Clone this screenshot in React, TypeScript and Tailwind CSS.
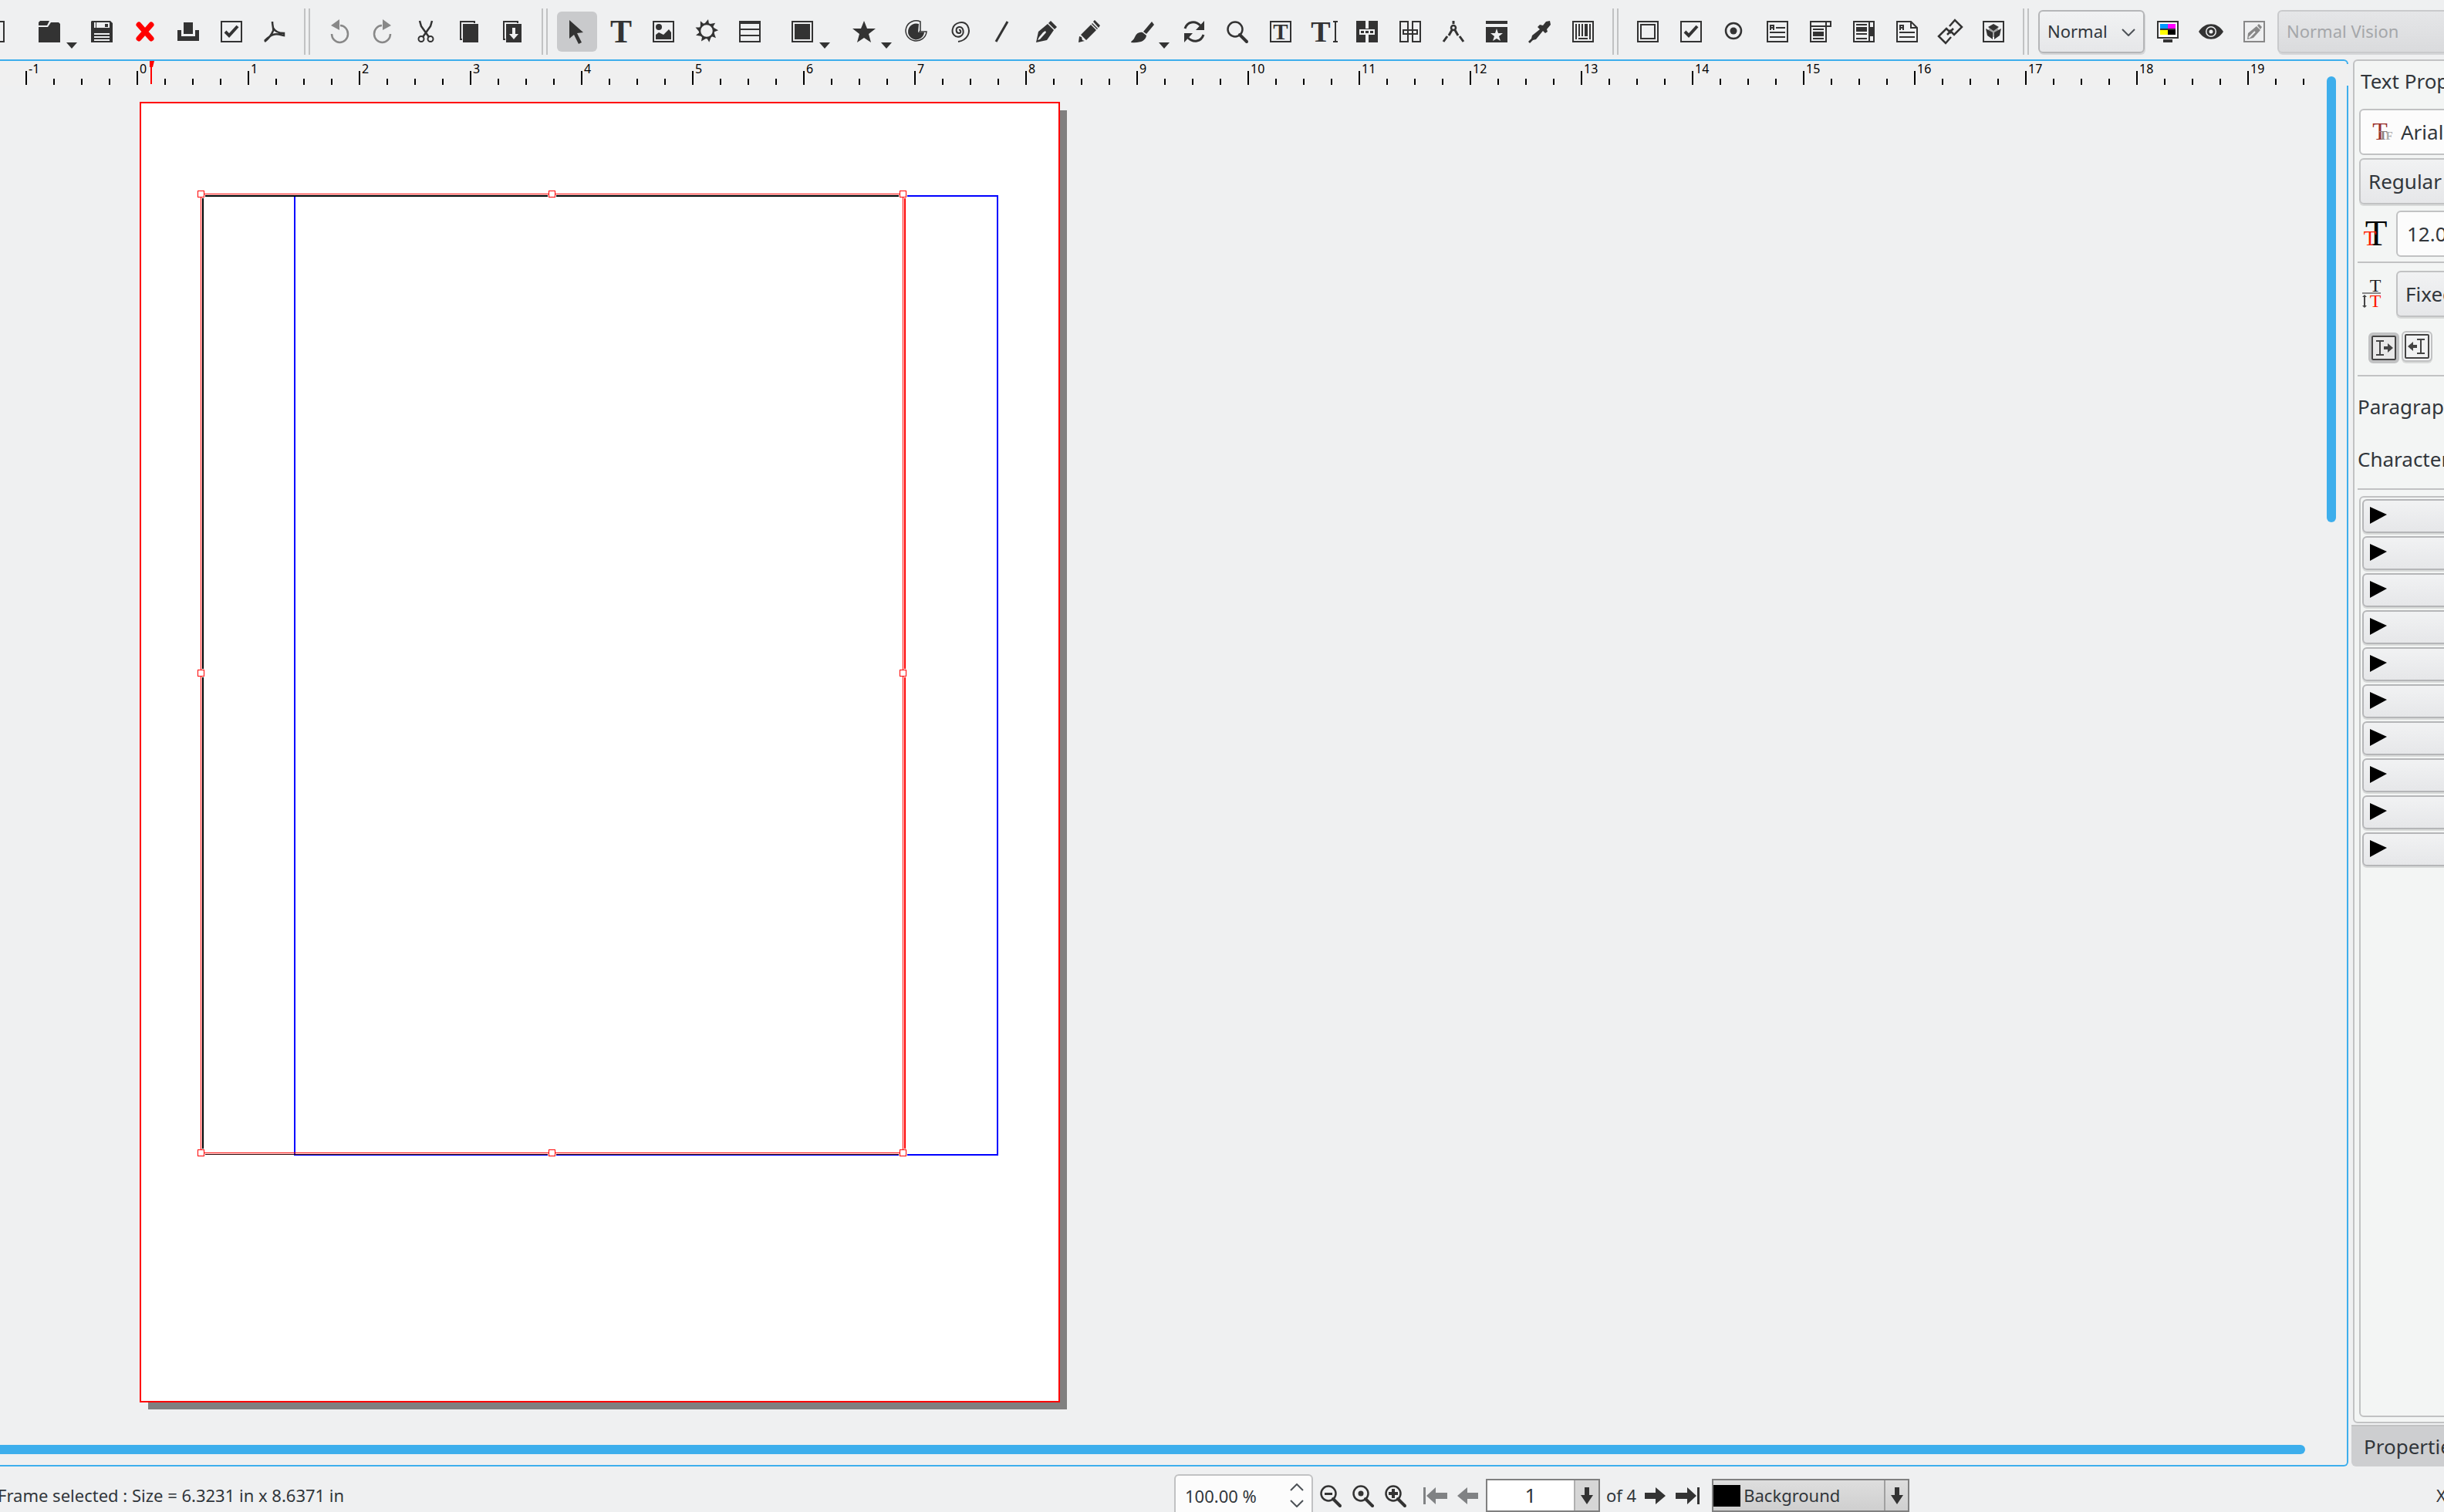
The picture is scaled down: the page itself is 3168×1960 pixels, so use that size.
import React from 'react';
import clsx from 'clsx';

interface IconProps {
  children: React.ReactNode;
  className?: string;
}

const Icon: React.FC<IconProps> = ({ children, className }) => (
  <svg
    viewBox="0 0 28 28"
    aria-hidden="true"
    className={clsx('size-7 shrink-0 overflow-visible fill-current stroke-current', className)}
    strokeWidth="0"
  >
    {children}
  </svg>
);

interface GlyphProps {
  x: number;
  y: number;
  size: number;
  children: string;
  color?: string;
  weight?: 'bold' | 'normal';
}

const Glyph: React.FC<GlyphProps> = ({ x, y, size, children, color = 'currentColor', weight = 'bold' }) => (
  <text x={x} y={y} fontSize={size} fill={color} fontWeight={weight} fontFamily="'Liberation Serif', serif" textAnchor="middle">
    {children}
  </text>
);

const Frame = () => <rect x="1" y="1" width="26" height="26" fill="none" strokeWidth="2" />;

const CheckMark = () => (
  <path d="M6 14l5 5L22 7" fill="none" strokeWidth="4" />
);

const Magnifier = () => (
  <>
    <circle cx="11" cy="11" r="9.5" fill="none" strokeWidth="2.5" />
    <path d="M17 18l9 9" fill="none" strokeWidth="4" strokeLinecap="round" />
  </>
);

const DropArrow = () => (
  <svg viewBox="0 0 14 8" aria-hidden="true" className="absolute right-0.5 bottom-1 h-2 w-3.5 fill-[#333333]">
    <path d="M0 0h14L7 8z" />
  </svg>
);

interface ToolProps {
  label: string;
  menu?: boolean;
  active?: boolean;
  disabled?: boolean;
  className?: string;
  children: React.ReactNode;
}

const Tool: React.FC<ToolProps> = ({ label, menu, active, disabled, className, children }) => (
  <button
    type="button"
    aria-label={label}
    aria-pressed={active}
    disabled={disabled}
    className={clsx(
      'relative flex h-13 shrink-0 items-center justify-center rounded-md',
      menu ? 'w-19' : 'w-13',
      active && 'bg-[#c9cacc]',
      disabled ? 'text-[#888888]' : 'text-[#333333]',
      className,
    )}
  >
    <Icon>{children}</Icon>
    {menu && <DropArrow />}
  </button>
);

const Separator = () => (
  <div className="flex h-15 w-6 shrink-0 justify-center gap-1">
    <div className="w-0.5 bg-[#c1c2c3]" />
    <div className="w-0.5 bg-[#c1c2c3]" />
  </div>
);

const FileTools = () => (
  <>
    <Tool label="New" className="-ml-[30px]">
      <rect x="1" y="1" width="22" height="26" fill="none" strokeWidth="2" />
    </Tool>
    <Tool label="Open" menu>
      <path d="M2 0h12l-3 6H0V2zM0 8h12l4-6h10l2 2v24H0z" />
    </Tool>
    <Tool label="Save">
      <path fillRule="evenodd" d="M1 0h24l3 3v25H0V1zM4 2v7h2V2zM7 2v7h17V2zM4 16v2h20v-2zM4 20v2h20v-2zM4 24v2h20v-2z" />
      <path d="M18 4h4v4h-4z" />
    </Tool>
    <Tool label="Close">
      <path d="M6 5l16 18M22 5L6 23" stroke="#ff0000" strokeWidth="7" strokeLinecap="round" />
    </Tool>
    <Tool label="Print">
      <path d="M0 12h5v8h18v-8h5v14H0zM8 2h12v15H8z" />
    </Tool>
    <Tool label="Preflight Verifier">
      <Frame />
      <CheckMark />
    </Tool>
    <Tool label="Save as PDF">
      <path d="M11 1c0 6 2 9 1 12-2 5-6 10-11 14M12 9c2 4 5 7 14 7v3c-5-1-9-3-14-1-4 1-7 4-11 8" fill="none" strokeWidth="2.5" />
    </Tool>
  </>
);

const EditTools = () => (
  <>
    <Tool label="Undo" disabled>
      <path d="M4 17A10.5 11 0 1 0 15 6" fill="none" strokeWidth="2.5" />
      <path d="M3 6L14-2v14z" />
    </Tool>
    <Tool label="Redo" disabled>
      <path d="M24 17A10.5 11 0 1 1 13 6" fill="none" strokeWidth="2.5" />
      <path d="M25 6L14-2v14z" />
    </Tool>
    <Tool label="Cut">
      <path d="M6 0l2 7 10 14M22 0l-2 7-10 14" fill="none" strokeWidth="2.5" />
      <circle cx="8" cy="23.5" r="3.5" fill="none" strokeWidth="2" />
      <circle cx="20" cy="23.5" r="3.5" fill="none" strokeWidth="2" />
    </Tool>
    <Tool label="Copy">
      <path d="M3 24V1h18v2" fill="none" strokeWidth="2" />
      <path d="M2 23h3v2H2zM6 4h20v24H6z" />
    </Tool>
    <Tool label="Paste">
      <path d="M3 24V1h18v2" fill="none" strokeWidth="2" />
      <path d="M2 23h3v2H2z" />
      <path fillRule="evenodd" d="M6 4h20v24H6zM14 9v8h-4l6 7 6-7h-4V9z" />
    </Tool>
  </>
);

const InsertTools = () => (
  <>
    <Tool label="Select Item" active>
      <path d="M4-1l18 16-8 1 6 12-4 2-6-12-6 5z" />
    </Tool>
    <Tool label="Insert Text Frame">
      <Glyph x={15} y={28} size={42}>T</Glyph>
    </Tool>
    <Tool label="Insert Image Frame">
      <Frame />
      <circle cx="8" cy="8" r="4" />
      <path d="M4 24v-6l4-3 6 3 7-7 3 4v9z" />
    </Tool>
    <Tool label="Insert Render Frame">
      <circle cx="14" cy="13" r="9" fill="none" strokeWidth="2.5" />
      {[0, 40, 80, 120, 160, 200, 240, 280, 320].map((angle) => (
        <path key={angle} d="M11 4l5-6 1 6z" transform={`rotate(${angle} 14 13)`} />
      ))}
    </Tool>
    <Tool label="Insert Table">
      <Frame />
      <path d="M1 1h26v3H1zM1 10h26v2H1zM1 18h26v2H1z" />
    </Tool>
    <Tool label="Insert Shape" menu>
      <Frame />
      <path d="M4 4h20v20H4z" />
    </Tool>
    <Tool label="Insert Polygon" menu>
      <path d="M14 0l4 10h11l-9 7 3 11-9-6-9 6 3-11-9-7h11z" />
    </Tool>
    <Tool label="Insert Arc">
      <path d="M19 1A13.5 13 0 1 0 27 14h-9l1-1z" fill="none" strokeWidth="1.5" />
      <path d="M17 4A10.5 10.5 0 1 0 24 15h-8z" />
    </Tool>
    <Tool label="Insert Spiral">
      <path
        d="M13 12c3-1 3 4 0 4-4 0-5-7 0-8 6-1 8 9 2 12-7 3-12-4-10-10C7 2 19-1 24 6c5 9 0 19-12 21"
        fill="none"
        strokeWidth="2"
      />
    </Tool>
    <Tool label="Insert Line">
      <path d="M5 27L20 1" strokeWidth="3" />
    </Tool>
    <Tool label="Insert Bezier Curve">
      <path fillRule="evenodd" d="M1 28l3-14L16 4l8 8-9 13zM3 25l3-1 8-9-1-2-3 2-5 6z" />
      <path d="M17 3l3-3 8 8-3 3z" />
    </Tool>
    <Tool label="Insert Freehand Line">
      <path d="M3 18L16 5l7 7L10 25zM17 4l1-1 7 7-1 1zM19 1l2-2 7 7-2 3z" />
      <path d="M1 20l-1 8 8-2-3-1-1-4z" />
    </Tool>
    <Tool label="Insert Calligraphic Line" menu>
      <path d="M27 1l3 4-10 12-4-3zM15 15l5 4c-1 7-8 10-20 9 1-3 3-2 5-7 2-5 6-7 10-6z" />
    </Tool>
    <Tool label="Rotate Item">
      <path d="M2 10C5 1 15-1 22 6M26 18C23 27 13 29 6 22" fill="none" strokeWidth="3" />
      <path d="M27 0v12H16zM1 28V16h11z" />
    </Tool>
    <Tool label="Zoom in or out">
      <Magnifier />
    </Tool>
    <Tool label="Edit Contents of Frame">
      <Frame />
      <Glyph x={14} y={24} size={29}>T</Glyph>
    </Tool>
    <Tool label="Edit Text with Story Editor">
      <Glyph x={10} y={27} size={38}>T</Glyph>
      <path d="M26 0h6v2h-2v24h2v2h-6v-2h2V2h-2z" />
    </Tool>
    <Tool label="Link Text Frames">
      <path fillRule="evenodd" d="M0 0h12v10h4V0h12v28H16V18h-4v10H0zM4 11v7h20v-7z" />
      <path d="M6 13h4v3H6zM12 13h4v3h-4zM18 13h4v3h-4z" />
    </Tool>
    <Tool label="Unlink Text Frames">
      <path
        d="M11 11V1H1v26h10V17M17 11V1h10v26H17V17M5 12h18v5H5zM11 11v6M17 11v6"
        fill="none"
        strokeWidth="2"
      />
    </Tool>
    <Tool label="Measurements">
      <path d="M14 0v4M12 12L8 19M6 20l-5 7M16 12l4 7M22 20l5 7" strokeWidth="3" />
      <circle cx="14" cy="9" r="3" fill="none" strokeWidth="2.5" />
    </Tool>
    <Tool label="Copy Item Properties">
      <path d="M0 0h28v4H0z" />
      <path fillRule="evenodd" d="M0 8h28v20H0zM14 10l-2 6H6l5 4-2 6 5-3 5 3-2-6 5-4h-6z" />
    </Tool>
    <Tool label="Eye Dropper">
      <path d="M22 1l5-1 1 5-5 6 1 3-3 2-3-3-9 11-4 1-4 4-2-2 4-4 1-4 10-8-3-3 3-3 4 1z" />
    </Tool>
    <Tool label="Insert Barcode">
      <Frame />
      <path d="M4 4h2v20H4zM8 4h2v16H8zM12 4h2v16h-2zM16 4h4v16h-4zM22 4h2v20h-2zM8 22h12v2H8z" />
    </Tool>
  </>
);

const PdfTools = () => (
  <>
    <Tool label="Insert PDF Push Button">
      <Frame />
      <rect x="5" y="5" width="18" height="18" fill="none" strokeWidth="2" />
    </Tool>
    <Tool label="Insert PDF Check Box">
      <Frame />
      <CheckMark />
    </Tool>
    <Tool label="Insert PDF Radio Button">
      <circle cx="13" cy="13" r="10" fill="none" strokeWidth="2.5" />
      <circle cx="13" cy="13" r="4.5" />
    </Tool>
    <Tool label="Insert Text Field">
      <Frame />
      <path d="M5 12V6h4v6M5 9h4" fill="none" strokeWidth="2" />
      <path d="M12 8h12v2H12zM4 14h20v2H4zM4 20h20v2H4z" />
    </Tool>
    <Tool label="Insert PDF Combo Box">
      <path d="M1 1h26v6H1zM21 1v26H1V1" fill="none" strokeWidth="2" />
      <path d="M4 10h14v2H4zM4 14h14v6H4zM4 22h14v2H4z" />
    </Tool>
    <Tool label="Insert PDF List Box">
      <Frame />
      <path d="M20 1h2v26h-2zM22 8h5v12h-5zM4 4h14v2H4zM4 8h14v6H4zM4 16h14v2H4zM4 22h14v2H4z" />
    </Tool>
    <Tool label="Insert Text Annotation">
      <path d="M1 1h18l8 8v18H1zM19 1v8h8" fill="none" strokeWidth="2" />
      <path d="M5 12V6h4v6M5 9h4" fill="none" strokeWidth="2" />
      <path d="M4 14h20v2H4zM4 20h20v2H4z" />
    </Tool>
    <Tool label="Insert Link Annotation">
      <path d="M13 7l7-8 9 9-10 10-6-6M15 21l-7 8-9-9 10-10 6 6M10 18l8-8" fill="none" strokeWidth="2.5" />
    </Tool>
    <Tool label="Insert 3D Annotation">
      <Frame />
      <path d="M14 4l7 4-7 5-7-5zM4 10l9 5v9l-7-5zM24 10l-9 5v9l7-5z" />
      <circle cx="14" cy="14" r="7" fillOpacity="0.4" />
    </Tool>
  </>
);

const Chevron: React.FC<{ className?: string }> = ({ className }) => (
  <svg viewBox="0 0 18 10" aria-hidden="true" className={clsx('h-2.5 w-[18px] fill-none stroke-[#4d5257]', className)}>
    <path d="M1 1l8 8 8-8" strokeWidth="2" />
  </svg>
);

const ViewTools = () => (
  <>
    <div className="relative shrink-0">
      <select
        aria-label="Preview quality"
        className="h-14 w-[138px] appearance-none rounded-md border-2 border-[#b5b6b8] bg-linear-to-b from-[#f1f2f3] to-[#e6e7e9] pl-2.5 text-[22px] shadow-[1px_2px_0_#d5d6d8]"
      >
        <option>Normal</option>
      </select>
      <Chevron className="pointer-events-none absolute top-6 right-3" />
    </div>
    <Tool label="Toggle Color Management System">
      <rect x="1" y="1" width="26" height="21" fill="#ffffff" strokeWidth="2" />
      <path d="M4 4h20v14H4z" />
      <path d="M4 4h10v6H4z" fill="#0099ff" />
      <path d="M14 4h10v6H14z" fill="#ff00ff" />
      <path d="M4 12h10v6H4z" fill="#ffff00" />
      <path d="M14 12h10v6H14z" fill="#000000" />
      <path d="M8 24h12v4H8z" />
    </Tool>
    <Tool label="Toggle Preview Mode">
      <path fillRule="evenodd" d="M-2 14C6 1 22 1 30 14 22 27 6 27-2 14zM14 7a7 7 0 1 0 0 14 7 7 0 0 0 0-14z" />
      <circle cx="14" cy="14" r="4" fill="none" strokeWidth="3" />
    </Tool>
    <Tool label="Edit in Preview Mode" disabled>
      <Frame />
      <path d="M5 24l1-8 11-9 5 5-9 10zM18 6l2-2 4 4-2 3z" />
      <path d="M7 22l8-8" stroke="#eff0f1" strokeWidth="2" />
    </Tool>
    <select
      aria-label="Visual appearance"
      disabled
      className="h-14 w-[280px] shrink-0 appearance-none rounded-md border-2 border-[#c9cacc] bg-linear-to-b from-[#e5e6e8] to-[#dadbdd] pl-2.5 text-[22px] text-[#a5a7aa] opacity-100 shadow-[1px_2px_0_#d5d6d8]"
    >
      <option>Normal Vision</option>
    </select>
  </>
);

const Toolbar = () => (
  <header className="flex h-[77px] shrink-0 items-center gap-1 overflow-hidden pt-1">
    <FileTools />
    <Separator />
    <EditTools />
    <Separator />
    <InsertTools />
    <Separator />
    <PdfTools />
    <Separator />
    <ViewTools />
  </header>
);

const inches = Array.from({ length: 21 }, (_, i) => i - 1);

const Ruler = () => (
  <div className="relative z-10 -mr-0.5 flex h-7 shrink-0 bg-[#f0f0f0] pl-[33px]">
    {inches.map((inch) => (
      <div key={inch} className="relative flex h-[27px] shrink-0 items-end">
        <span className="absolute -top-1 left-1 text-[16px] leading-5 text-black">{inch}</span>
        <div className="h-[18px] w-9 border-l-2 border-black" />
        <div className="h-2 w-9 border-l-2 border-black" />
        <div className="h-2 w-9 border-l-2 border-black" />
        {inch < 19 && <div className="h-2 w-9 border-l-2 border-black" />}
      </div>
    ))}
    <svg viewBox="0 0 6 30" aria-hidden="true" className="absolute -top-1 left-[194px] h-[30px] w-1.5 fill-[#ff0000]">
      <path d="M0 0h6L4 8H0zM1 0h2v30H1z" />
    </svg>
  </div>
);

const handles = [
  [79.5, 119.5],
  [534.5, 119.5],
  [989.5, 119.5],
  [79.5, 740.5],
  [989.5, 740.5],
  [79.5, 1362.5],
  [534.5, 1362.5],
  [989.5, 1362.5],
];

// Page with its margin guides and the selected text frame
const Page = () => (
  <div className="w-[1193px] border-2 border-[#ff0000] bg-white shadow-[10px_10px_0_-1px_#808080]">
    <svg viewBox="2 2 1189 1682" className="block w-full" shapeRendering="crispEdges" fill="none">
      <rect x="201" y="122" width="911" height="1243" stroke="#0000ff" strokeWidth="2" />
      <path d="M81 121h910v2H83v1241H81z" fill="#000000" />
      <path d="M83 1364h908v1H83z" fill="#300000" />
      <path d="M991 121h2v1243h-2z" fill="#ff0000" />
      {handles.map(([x, y]) => (
        <rect key={`${x}-${y}`} x={x - 5.5} y={y - 5.5} width="11" height="11" fill="#ffffff" />
      ))}
      <rect x="79.5" y="119.5" width="910" height="1243" stroke="#ff0000" />
      {handles.map(([x, y]) => (
        <rect key={`${x}-${y}`} x={x - 4} y={y - 4} width="8" height="8" fill="#ffffff" stroke="#ff0000" />
      ))}
    </svg>
  </div>
);

const Canvas = () => (
  <main className="flex min-w-0 flex-1 flex-col rounded-r-md border-y-2 border-r-2 border-[#3daeec] pt-1">
    <Ruler />
    <div className="flex min-h-0 flex-1">
      <div className="min-w-0 flex-1 overflow-hidden pt-[21px] pl-[181px]">
        <Page />
      </div>
      <div className="relative z-20 -mt-3 mr-3.5 h-[578px] w-3 rounded-full bg-[#3daeec]" />
    </div>
    <div className="mr-[54px] mb-3.5 h-3 rounded-r-full bg-[#3daeec]" />
  </main>
);

const fieldBase = 'h-15 appearance-none rounded-md border-2 border-[#c1c2c3] text-[26px]';
const raised = 'bg-linear-to-b from-[#f1f2f3] to-[#e6e7e9] shadow-[0_2px_0_#d8dad9]';

const sections = [
  'Color & Effects',
  'Style Settings',
  'First Line Offset',
  'Orphans and Widows',
  'Paragraph Effects',
  'Columns & Text Distances',
  'Optical Margins',
  'Hyphenation',
  'Advanced Settings',
  'OpenType Font Features',
];

const Divider = () => <hr className="mx-1 h-0.5 shrink-0 border-0 bg-[#c1c2c3]" />;

const TextProperties = () => (
  <aside className="ml-1 flex w-[120px] shrink-0 flex-col overflow-hidden">
    <div className="ml-0.5 flex min-h-0 w-[560px] flex-1 flex-col rounded-md border-2 border-[#c1c2c3] bg-[#f3f5f4] pb-1.5">
      <h2 className="mt-2 ml-2 text-[26px] leading-9">Text Properties</h2>
      <div className="mt-[18px] flex flex-col gap-1 pl-1.5">
        <div className="relative">
          <svg viewBox="0 0 26 24" aria-hidden="true" className="absolute top-[18px] left-4 h-6 w-[26px] overflow-visible">
            <Glyph x={11} y={22} size={32} color="#99302c" weight="normal">T</Glyph>
            <Glyph x={15} y={22} size={17} color="#8f8080">T</Glyph>
            <Glyph x={23} y={22} size={15} color="#aaaaaa">F</Glyph>
          </svg>
          <input aria-label="Font family" defaultValue="Arial" className={clsx(fieldBase, 'w-[500px] bg-[#fcfcfc] pl-[52px]')} />
        </div>
        <select aria-label="Font style" className={clsx(fieldBase, raised, 'w-[500px] pl-2.5')}>
          <option>Regular</option>
        </select>
      </div>
      <label className="mt-2 flex items-center gap-3 pl-3">
        <svg viewBox="0 0 30 32" aria-hidden="true" className="h-8 w-[30px] overflow-visible">
          <Glyph x={16} y={31} size={47} color="#000000" weight="normal">T</Glyph>
          <Glyph x={8} y={31} size={27} color="#ff1a00" weight="normal">T</Glyph>
        </svg>
        <input aria-label="Font size" defaultValue="12.00 pt" className={clsx(fieldBase, 'w-60 bg-[#fcfcfc] pl-3')} />
      </label>
      <div className="mt-1.5">
        <Divider />
      </div>
      <label className="mt-2.5 flex items-center gap-5 pl-2.5">
        <svg viewBox="0 0 24 38" aria-hidden="true" className="h-[38px] w-6 overflow-visible">
          <Glyph x={17} y={16} size={24} color="#222222" weight="normal">T</Glyph>
          <Glyph x={17} y={36} size={24} color="#ff1a00" weight="normal">T</Glyph>
          <path d="M0 17h24v2H0z" fill="#888888" />
          <path d="M0 23l3-3 3 3H4v11h2l-3 3-3-3h2V23z" fill="#444444" />
        </svg>
        <select aria-label="Line spacing mode" className={clsx(fieldBase, raised, 'w-60 pl-2.5')}>
          <option>Fixed Linespacing</option>
        </select>
      </label>
      <div className="mt-[18px] flex items-start gap-[3px] pl-[18px] text-[#444444]">
        <button type="button" aria-label="Left-to-Right paragraph" className="mt-0.5 rounded-md border-4 border-[#c1c2c3] bg-[#e8e8e8]">
          <svg viewBox="0 0 32 32" aria-hidden="true" className="size-8 fill-current stroke-current" strokeWidth="0">
            <rect x="1" y="1" width="30" height="30" rx="1" fill="none" strokeWidth="2" />
            <path d="M6 6h10v2h-4v16h4v2H6v-2h4V8H6zM16 14h5v-4l7 6-7 6v-4h-5z" />
          </svg>
        </button>
        <button type="button" aria-label="Right-to-Left paragraph" className="rounded-md border-2 border-[#c1c2c3] bg-[#f1f2f3] p-0.5 shadow-[0_2px_0_#d8dad9]">
          <svg viewBox="0 0 32 32" aria-hidden="true" className="size-8 fill-current stroke-current" strokeWidth="0">
            <rect x="1" y="1" width="30" height="30" rx="1" fill="none" strokeWidth="2" />
            <path d="M16 6h10v2h-4v16h4v2H16v-2h4V8h-4zM16 14h-5v-4l-7 6 7 6v-4h5z" />
          </svg>
        </button>
      </div>
      <div className="mt-[15px]">
        <Divider />
      </div>
      <p className="mt-[21px] ml-1 text-[26px] leading-9">Paragraph Style:</p>
      <p className="mt-8 mb-5 ml-1 text-[26px] leading-9">Character Style:</p>
      <Divider />
      <div className="mt-2 ml-1.5 flex w-[540px] flex-1 flex-col gap-1 rounded-md border-2 border-[#c1c2c3] p-0.5">
        {sections.map((section) => (
          <button
            key={section}
            type="button"
            aria-label={section}
            className={clsx('flex h-11 shrink-0 items-center rounded-md border-2 border-[#b5b6b8] pb-0.5 pl-2', raised)}
          >
            <svg viewBox="0 0 22 22" aria-hidden="true" className="size-[22px] fill-black">
              <path d="M0 0l22 10L0 22z" />
            </svg>
          </button>
        ))}
      </div>
    </div>
    <div className="mt-0.5 w-[560px] border-t-2 border-[#c1c2c3]">
      <button type="button" className="block h-[52px] w-40 rounded-bl-md bg-[#cdced0] pl-4 text-left text-[26px]">
        Properties
      </button>
    </div>
  </aside>
);

interface StatusButtonProps {
  label: string;
  disabled?: boolean;
  children: React.ReactNode;
}

const StatusButton: React.FC<StatusButtonProps> = ({ label, disabled, children }) => (
  <button
    type="button"
    aria-label={label}
    disabled={disabled}
    className={clsx('flex w-[42px] shrink-0 justify-center', disabled ? 'text-[#808284]' : 'text-[#333333]')}
  >
    <Icon>{children}</Icon>
  </button>
);

const DownArrow = () => (
  <svg viewBox="0 0 16 22" aria-hidden="true" className="h-[22px] w-4 fill-[#333333]">
    <path d="M5 0h6v10h5l-8 12-8-12h5z" />
  </svg>
);

const StatusBar = () => (
  <footer className="flex h-[59px] shrink-0 items-start overflow-hidden pt-2.5 text-[22px] whitespace-nowrap">
    <div className="-ml-[3px] flex h-[55px] w-[1525px] shrink items-center">Frame selected : Size = 6.3231 in x 8.6371 in</div>
    <div className="relative shrink-0">
      <input
        aria-label="Zoom level"
        defaultValue="100.00 %"
        className="h-[55px] w-[180px] rounded-md border-2 border-[#c1c2c3] bg-[#fcfcfc] pl-3"
      />
      <Chevron className="absolute top-3 right-3 rotate-180" />
      <Chevron className="absolute right-3 bottom-3" />
    </div>
    <div className="flex h-[55px] items-center pl-0.5">
      <StatusButton label="Zoom out">
        <Magnifier />
        <path d="M6 10h10v3H6z" />
      </StatusButton>
      <StatusButton label="Zoom to 100%">
        <Magnifier />
        <circle cx="11" cy="11" r="3.5" />
      </StatusButton>
      <StatusButton label="Zoom in">
        <Magnifier />
        <path d="M9 5h4v4h4v4h-4v4H9v-4H5V9h4z" />
      </StatusButton>
      <div className="w-2.5" />
      <StatusButton label="Go to the first page" disabled>
        <path d="M-2 3h3v22h-3zM2 14L14 3v7h15v8H14v7z" />
      </StatusButton>
      <StatusButton label="Go to the previous page" disabled>
        <path d="M0 14L13 3v7h14v8H13v7z" />
      </StatusButton>
    </div>
    <div className="mt-1.5 ml-0.5 flex h-[43px] shrink-0 border-2 border-[#808080]">
      <input aria-label="Current page" defaultValue="1" className="w-[112px] bg-white text-center text-[26px]" />
      <button
        type="button"
        aria-label="Choose page"
        className="flex w-8 items-center justify-center border-l-2 border-[#b0b0b0] bg-[#d6d6d6]"
      >
        <DownArrow />
      </button>
    </div>
    <div className="flex h-[55px] items-center">
      <span className="pr-1 pl-2">of 4</span>
      <StatusButton label="Go to the next page">
        <path d="M27 14L14 3v7H0v8h14v7z" />
      </StatusButton>
      <StatusButton label="Go to the last page">
        <path d="M25 14L13 3v7H-2v8h15v7zM26 3h3v22h-3z" />
      </StatusButton>
    </div>
    <div className="mt-1.5 ml-2.5 flex h-[43px] shrink-0 items-center border-2 border-[#808080] bg-linear-to-b from-[#dedede] to-[#cfcfcf]">
      <span className="h-7 w-[35px] bg-black" />
      <select aria-label="Current layer" className="w-[186px] appearance-none pl-1">
        <option>Background</option>
      </select>
      <span className="flex h-full w-[31px] items-center justify-center border-l-2 border-[#a0a0a0]">
        <DownArrow />
      </span>
    </div>
    <div className="ml-auto flex h-[55px] w-2.5 shrink-0 items-center">X-Pos:</div>
  </footer>
);

const App = () => (
  <div className="flex h-screen flex-col overflow-hidden bg-[#eff0f1] font-['Noto_Sans',sans-serif] text-[#31363b]">
    <Toolbar />
    <div className="flex min-h-0 flex-1">
      <Canvas />
      <TextProperties />
    </div>
    <StatusBar />
  </div>
);

export default App;
